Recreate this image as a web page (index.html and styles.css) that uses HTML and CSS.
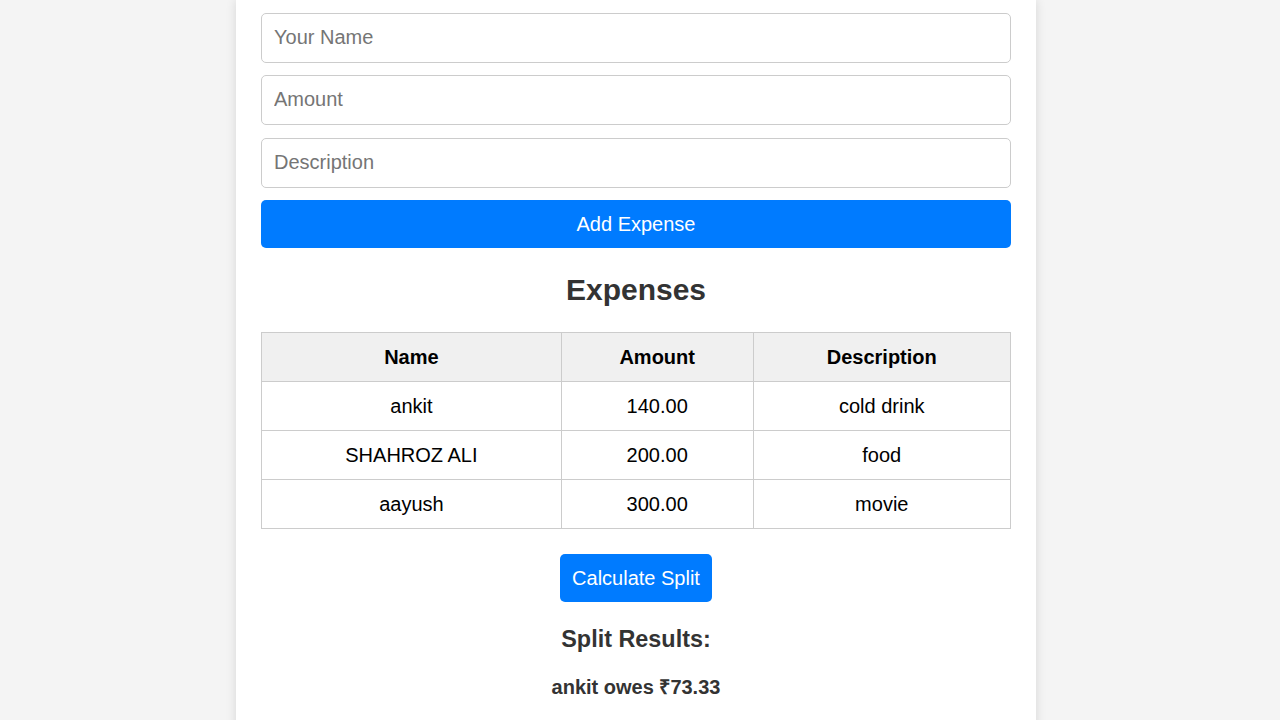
FILE: index.html
```html
<!DOCTYPE html>
<html>
<head>
<meta charset="utf-8">
<link rel="stylesheet" href="styles.css">
</head>
<body>
<div class="container">
  <form class="form">
    <input class="field" type="text" placeholder="Your Name">
    <input class="field" type="text" placeholder="Amount">
    <input class="field" type="text" placeholder="Description">
    <button class="btn btn-full" type="button">Add Expense</button>
  </form>
  <h2 class="title">Expenses</h2>
  <table class="table">
    <thead>
      <tr><th>Name</th><th>Amount</th><th>Description</th></tr>
    </thead>
    <tbody>
      <tr><td>ankit</td><td>140.00</td><td>cold drink</td></tr>
      <tr><td>SHAHROZ ALI</td><td>200.00</td><td>food</td></tr>
      <tr><td>aayush</td><td>300.00</td><td>movie</td></tr>
    </tbody>
  </table>
  <div class="actions">
    <button class="btn" type="button">Calculate Split</button>
  </div>
  <h3 class="subtitle">Split Results:</h3>
  <p class="result">ankit owes ₹73.33</p>
</div>
</body>
</html>
```
FILE: styles.css
```css
html, body {
  margin: 0;
  padding: 0;
}
body {
  background: #f4f4f4;
  font-family: "Liberation Sans", Arial, sans-serif;
  font-size: 20px;
  color: #333;
  padding-right: 8px;
}
.container {
  width: 800px;
  box-sizing: border-box;
  margin: 0 auto;
  background: #fff;
  padding: 13px 25px 40px;
  box-shadow: 0 0 10px rgba(0, 0, 0, 0.12);
  min-height: 760px;
}
.form {
  display: flex;
  flex-direction: column;
  gap: 12.33px;
}
.field {
  height: 50px;
  box-sizing: border-box;
  padding: 11px 12px 12px;
  border: 1px solid #ccc;
  border-radius: 5px;
  font-family: inherit;
  font-size: 20px;
  color: #333;
  outline: none;
}
.field::placeholder {
  color: #757575;
}
.btn {
  height: 48px;
  box-sizing: border-box;
  padding: 2px 12.5px 0;
  border: none;
  border-radius: 5px;
  background: #007bff;
  color: #fff;
  font-family: inherit;
  font-size: 20px;
  cursor: pointer;
}
.btn-full {
  width: 100%;
}
.title {
  margin: 25px 0;
  font-size: 30px;
  line-height: 34px;
  text-align: center;
  color: #333;
}
.table {
  width: 100%;
  border-collapse: collapse;
  color: #000;
}
.table th,
.table td {
  border: 1px solid #ccc;
  padding: 13px 12px 11px;
  height: 49px;
  box-sizing: border-box;
  line-height: 23px;
  text-align: center;
  font-size: 20px;
}
.table th {
  background: #f0f0f0;
  font-weight: bold;
}
.actions {
  display: flex;
  justify-content: center;
  margin-top: 25px;
}
.subtitle {
  margin: 24px 0 23px;
  font-size: 23.4px;
  line-height: 27px;
  text-align: center;
  color: #333;
}
.result {
  margin: 0;
  font-weight: bold;
  font-size: 20px;
  line-height: 23px;
  text-align: center;
  color: #333;
}
```
